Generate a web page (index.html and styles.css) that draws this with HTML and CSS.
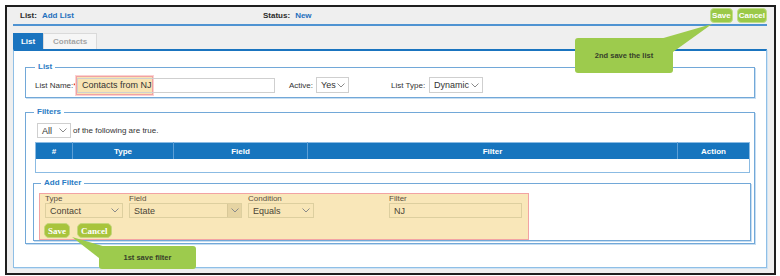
FILE: index.html
```html
<!DOCTYPE html>
<html lang="en">
<head>
    <meta charset="UTF-8">
    <title>Add List</title>
    <link rel="stylesheet" href="styles.css">
</head>
<body>
<div class="frame">
    <div class="topbar">
        <div class="meta meta-list"><b>List:</b><a href="#">Add List</a></div>
        <div class="meta"><b>Status:</b><a href="#">New</a></div>
        <div class="actions">
            <button class="btn-top">Save</button>
            <button class="btn-top">Cancel</button>
        </div>
    </div>

    <div class="tabs">
        <span class="tab active">List</span>
        <span class="tab">Contacts</span>
    </div>

    <div class="panel">
        <fieldset class="box box-list">
            <legend>List</legend>
            <div class="row">
                <label class="lbl-name">List Name:<span class="req">*</span></label>
                <span class="name-wrap">
                    <span class="mark"></span>
                    <input class="text-input name-input" type="text" value="Contacts from NJ">
                </span>
                <label class="lbl-active">Active:</label>
                <span class="select w-yes"><span>Yes</span><svg width="8" height="5" viewBox="0 0 8 5"><polyline points="0.5,0.5 4,4 7.5,0.5" fill="none" stroke="#8a8a8a" stroke-width="1"/></svg></span>
                <label class="lbl-type">List Type:</label>
                <span class="select w-dyn"><span>Dynamic</span><svg width="8" height="5" viewBox="0 0 8 5"><polyline points="0.5,0.5 4,4 7.5,0.5" fill="none" stroke="#8a8a8a" stroke-width="1"/></svg></span>
            </div>
        </fieldset>

        <fieldset class="box box-filters">
            <legend>Filters</legend>
            <div class="match">
                <span class="select w-all"><span>All</span><svg width="8" height="5" viewBox="0 0 8 5"><polyline points="0.5,0.5 4,4 7.5,0.5" fill="none" stroke="#8a8a8a" stroke-width="1"/></svg></span>
                <span>of the following are true.</span>
            </div>
            <table class="grid">
                <colgroup>
                    <col class="c-num"><col class="c-type"><col class="c-field"><col class="c-filter"><col class="c-action">
                </colgroup>
                <thead>
                    <tr><th>#</th><th>Type</th><th>Field</th><th>Filter</th><th>Action</th></tr>
                </thead>
                <tbody>
                    <tr><td colspan="5"></td></tr>
                </tbody>
            </table>

            <fieldset class="box box-add">
                <legend>Add Filter</legend>
                <div class="add-area">
                    <div class="add-fields">
                        <div class="col">
                            <span class="cap">Type</span>
                            <span class="select soft w-contact"><span>Contact</span><svg width="8" height="5" viewBox="0 0 8 5"><polyline points="0.5,0.5 4,4 7.5,0.5" fill="none" stroke="#8a8a8a" stroke-width="1"/></svg></span>
                        </div>
                        <div class="col">
                            <span class="cap">Field</span>
                            <span class="select soft w-state"><span>State</span><span class="arrow-box"><svg width="8" height="5" viewBox="0 0 8 5"><polyline points="0.5,0.5 4,4 7.5,0.5" fill="none" stroke="#8a8a8a" stroke-width="1"/></svg></span></span>
                        </div>
                        <div class="col">
                            <span class="cap">Condition</span>
                            <span class="select soft w-equals"><span>Equals</span><svg width="8" height="5" viewBox="0 0 8 5"><polyline points="0.5,0.5 4,4 7.5,0.5" fill="none" stroke="#8a8a8a" stroke-width="1"/></svg></span>
                        </div>
                        <div class="col">
                            <span class="cap">Filter</span>
                            <input class="text-input soft filter-input" type="text" value="NJ">
                        </div>
                    </div>
                    <div class="add-actions">
                        <button class="btn-olive">Save</button>
                        <button class="btn-olive">Cancel</button>
                    </div>
                </div>
            </fieldset>
        </fieldset>
    </div>

    <div class="callout callout-list">
        <svg class="pointer" width="60" height="35" viewBox="0 0 60 35"><polygon points="5,17 57,2 18,30" fill="#9dcb4d"/></svg>
        <span>2nd save the list</span>
    </div>
    <div class="callout callout-filter">
        <svg class="pointer" width="40" height="28" viewBox="0 0 40 28"><polygon points="3,3 37,13 30,24" fill="#9dcb4d"/></svg>
        <span>1st save filter</span>
    </div>
</div>
</body>
</html>
```

FILE: styles.css
```css
body {
    margin: 0;
    background: #fff;
    font-family: "Liberation Sans", Arial, sans-serif;
    font-size: 8px;
    color: #333;
}
.frame {
    position: relative;
    box-sizing: border-box;
    width: 771px;
    height: 270px;
    margin: 5px 0 0 5px;
    border: 2px solid #1e1e1e;
    background: #efefef;
}

/* top bar */
.topbar {
    display: flex;
    align-items: center;
    height: 17px;
    margin: 0 7px 0 6px;
    padding-left: 7px;
    border-bottom: 2px solid #4f93d2;
}
.meta {
    display: flex;
    gap: 5px;
}
.meta-list {
    width: 243px;
}
.meta b {
    color: #2b2b2b;
}
.meta a {
    color: #1f70bd;
    font-weight: bold;
    text-decoration: none;
}
.actions {
    display: flex;
    gap: 4px;
    margin-left: auto;
}
.btn-top {
    height: 15px;
    padding: 0 1px;
    border: 1px solid #c0df86;
    border-radius: 4px;
    background: #9bc948;
    color: #fff;
    font-family: "Liberation Sans", Arial, sans-serif;
    font-size: 8px;
    font-weight: bold;
}

/* tabs */
.tabs {
    display: flex;
    margin: 7px 7px 0 6px;
}
.tab {
    box-sizing: border-box;
    height: 16px;
    line-height: 15px;
    padding: 0 9px;
    font-weight: bold;
    color: #a4a4a4;
    background: #f6f6f6;
    border: 1px solid #dadada;
    border-bottom: none;
}
.tab.active {
    width: 30px;
    padding: 0;
    text-align: center;
    color: #fff;
    background: #1a74bf;
    border-color: #1a74bf;
}

/* white panel */
.panel {
    box-sizing: border-box;
    height: 219px;
    margin: 0 7px 0 6px;
    padding: 11px 11px 0 11px;
    background: #fff;
    border: 1px solid #8fbfe6;
    border-top: 2px solid #1a74bf;
    box-shadow: 1px 1px 0 #cfe3f4;
}

/* fieldsets */
.box {
    margin: 0;
    border: 1px solid #72a8d8;
    box-shadow: 1px 1px 0 #c7def2;
}
.box legend {
    padding: 0 3px;
    margin-left: 0;
    line-height: 10px;
    font-size: 8px;
    font-weight: bold;
    color: #2a7bc4;
}
.box-list {
    padding: 5px 8px 4px 9px;
}
.box-filters {
    margin-top: 9px;
    padding: 6px 3px 2px 7px;
}
.box-filters > legend {
    margin-left: 1px;
}
.box-add {
    margin: 5px 0 0 0;
    padding: 5px 8px 0 5px;
}
.box-add legend {
    margin-left: 2px;
}

/* list row */
.row {
    display: flex;
    align-items: center;
    height: 16px;
}
.lbl-name {
    width: 42px;
}
.req {
    color: #d22;
}
.name-wrap {
    position: relative;
    display: inline-block;
    height: 15px;
}
.mark {
    position: absolute;
    left: -1px;
    top: -2px;
    width: 75px;
    height: 17px;
    background: #f8e4b4;
    border: 1px solid #f2a2a2;
    box-shadow: 0 0 0 1px #fbd1d1;
}
.text-input {
    box-sizing: border-box;
    height: 15px;
    padding: 0 4px;
    border: 1px solid #cfcfcf;
    font-family: "Liberation Sans", Arial, sans-serif;
    font-size: 9px;
    color: #333;
    outline: none;
}
.name-input {
    position: relative;
    width: 198px;
    background: transparent;
}
.lbl-active {
    margin-left: 14px;
    margin-right: 3px;
}
.lbl-type {
    margin-left: 42px;
    margin-right: 4px;
}

/* select look */
.select {
    box-sizing: border-box;
    display: inline-flex;
    align-items: center;
    justify-content: space-between;
    height: 16px;
    padding: 0 3px 0 4px;
    background: #fff;
    border: 1px solid #cfcfcf;
    font-size: 9px;
    color: #333;
}
.w-yes { width: 33px; }
.w-dyn { width: 54px; }
.w-all { width: 34px; height: 15px; margin-right: 2px; }

.match {
    display: flex;
    align-items: center;
    margin-left: 4px;
}

/* filter table */
.grid {
    width: 714px;
    margin: 4px 0 0 2px;
    border-collapse: collapse;
    table-layout: fixed;
    border: 1px solid #8bbbe3;
}
.c-num { width: 37px; }
.c-type { width: 101px; }
.c-field { width: 134px; }
.c-filter { width: 370px; }
.c-action { width: 72px; }
.grid th {
    height: 16px;
    padding: 0;
    background: #1775be;
    color: #fff;
    font-weight: bold;
    border-left: 1px solid #5d9fd6;
}
.grid th:first-child {
    border-left: none;
}
.grid td {
    height: 13px;
    padding: 0;
}

/* add filter */
.add-area {
    box-sizing: border-box;
    width: 490px;
    height: 47px;
    padding: 0 0 0 5px;
    background: #f9e7b9;
    border: 1px solid #f2a3a3;
}
.add-fields {
    display: grid;
    grid-template-columns: 84px 119px 141px 133px;
}
.col {
    display: flex;
    flex-direction: column;
}
.cap {
    height: 9px;
    line-height: 9px;
    color: #5a5040;
}
.select.soft {
    height: 15px;
    background: #f8e6b7;
    border-color: #ddcf9f;
    color: #4a4436;
}
.w-contact { width: 78px; }
.w-state { width: 113px; padding-right: 0; }
.w-equals { width: 66px; }
.arrow-box {
    display: flex;
    align-items: center;
    justify-content: center;
    width: 13px;
    height: 13px;
    background: #e6d4a3;
    border-left: 1px solid #d8c898;
}
.filter-input {
    width: 133px;
    background: #f8e6b7;
    border-color: #ddcf9f;
    color: #4a4436;
}
.add-actions {
    display: flex;
    gap: 7px;
    margin: 5px 0 0 -1px;
}
.btn-olive {
    height: 15px;
    padding: 0 3px;
    border: 1px solid #c4d67c;
    border-radius: 5px;
    background: #a8c43c;
    color: #fff;
    font-family: "Liberation Serif", "Times New Roman", serif;
    font-size: 9px;
    font-weight: bold;
}

/* annotation callouts */
.callout {
    position: absolute;
    display: flex;
    align-items: center;
    justify-content: center;
    background: #9dcb4d;
    border-radius: 3px;
    color: #36402a;
    font-size: 7.5px;
    font-weight: bold;
}
.callout span {
    position: relative;
}
.pointer {
    position: absolute;
}
.callout-list {
    left: 568px;
    top: 31px;
    width: 98px;
    height: 35px;
}
.callout-list .pointer {
    left: 80px;
    top: -16px;
}
.callout-filter {
    left: 92px;
    top: 239px;
    width: 97px;
    height: 23px;
}
.callout-filter .pointer {
    left: -30px;
    top: -12px;
}
```
